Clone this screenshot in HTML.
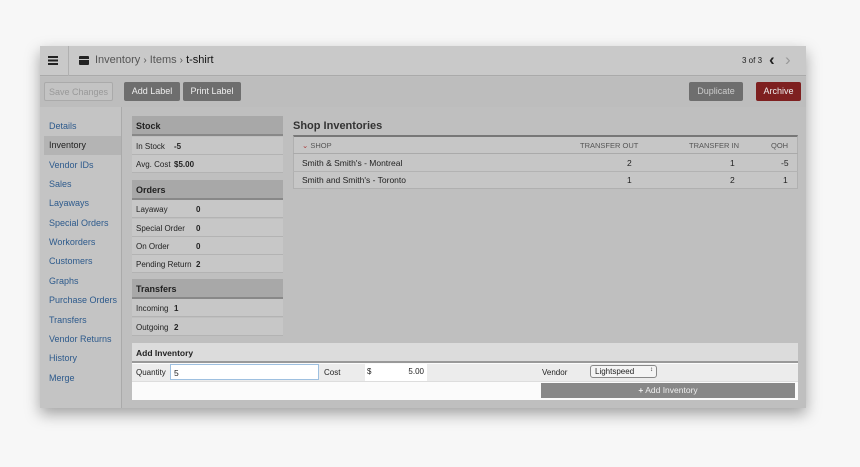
<!DOCTYPE html>
<html><head><style>
*{box-sizing:border-box;margin:0;padding:0}
body{width:860px;height:467px;background:#f7f7f7;font-family:"Liberation Sans",sans-serif;font-size:8.5px;color:#222;position:relative;overflow:hidden}
.a{position:absolute}
.win{left:40px;top:46px;width:766px;height:362px;background:#bfbfbf;box-shadow:0 6px 14px rgba(0,0,0,.35)}
.btn{position:absolute;height:19px;line-height:19px;text-align:center;color:#eee;font-size:9px;border-radius:2px}
.side div{position:absolute;left:9px;color:#2d5a8c;font-size:9px}
.ph{position:absolute;left:132px;width:151px;height:20px;background:#a8a8a8;border-bottom:2px solid #888;font-weight:bold;font-size:9px;padding:5px 0 0 4px}
.pr{position:absolute;left:132px;width:151px;height:18px;background:#c7c7c7;border-bottom:1px solid #b3b3b3;font-size:8px;padding:5px 0 0 4px}
.pr b{position:absolute;top:5px}
</style></head><body>
<div class="a win">
 <div class="a" style="left:0;top:0;width:766px;height:30px;background:#c9c9c9;border-bottom:1px solid #aaa"></div>
 <div class="a" style="left:28px;top:0;width:1px;height:30px;background:#b0b0b0"></div>
 <div class="a" style="left:8px;top:10px;width:10px;height:2px;background:#222;box-shadow:0 3.5px 0 #222,0 7px 0 #222"></div>
 <div class="a" style="left:39px;top:10px;width:10px;height:9px;background:#222;border-radius:1px"></div>
 <div class="a" style="left:39px;top:13px;width:10px;height:1px;background:#c9c9c9"></div>
 <div class="a" style="left:55px;top:8px;font-size:11px;color:#555">Inventory <span style="font-size:10px">›</span> Items <span style="font-size:10px">›</span> <span style="color:#111">t-shirt</span></div>
 <div class="a" style="left:702px;top:10px;font-size:8px;color:#222">3 of 3</div>
 <div class="a" style="left:729px;top:4px;font-size:17px;color:#222;font-weight:bold">&#8249;</div>
 <div class="a" style="left:745px;top:4px;font-size:17px;color:#999">&#8250;</div>
 <div class="a" style="left:0;top:31px;width:766px;height:30px;background:#bdbdbd"></div>
 <div class="btn" style="left:4px;top:36px;width:69px;border:1px solid #aaa;color:#999;background:#c3c3c3">Save Changes</div>
 <div class="btn" style="left:84px;top:36px;width:56px;background:#6e6e6e">Add Label</div>
 <div class="btn" style="left:143px;top:36px;width:58px;background:#6e6e6e">Print Label</div>
 <div class="btn" style="left:649px;top:36px;width:54px;background:#6e6e6e;color:#ccc">Duplicate</div>
 <div class="btn" style="left:716px;top:36px;width:45px;background:#7e2020">Archive</div>
 <div class="a" style="left:0;top:61px;width:82px;height:301px;background:#c4c4c4;border-right:1px solid #aaa"></div>
 <div class="a" style="left:4px;top:90px;width:77px;height:19px;background:#b4b4b4"></div>
 <div class="side">
  <div style="top:75px">Details</div><div style="top:94px;color:#222">Inventory</div><div style="top:114px">Vendor IDs</div><div style="top:133px">Sales</div><div style="top:152px">Layaways</div><div style="top:172px">Special Orders</div><div style="top:191px">Workorders</div><div style="top:210px">Customers</div><div style="top:230px">Graphs</div><div style="top:249px">Purchase Orders</div><div style="top:269px">Transfers</div><div style="top:288px">Vendor Returns</div><div style="top:307px">History</div><div style="top:327px">Merge</div>
 </div>
</div>
<div class="ph" style="top:116px">Stock</div>
<div class="pr" style="top:137px">In Stock<b style="left:42px">-5</b></div>
<div class="pr" style="top:155px">Avg. Cost<b style="left:42px">$5.00</b></div>
<div class="ph" style="top:180px">Orders</div>
<div class="pr" style="top:200px">Layaway<b style="left:64px">0</b></div>
<div class="pr" style="top:219px">Special Order<b style="left:64px">0</b></div>
<div class="pr" style="top:237px">On Order<b style="left:64px">0</b></div>
<div class="pr" style="top:255px">Pending Return<b style="left:64px">2</b></div>
<div class="ph" style="top:279px">Transfers</div>
<div class="pr" style="top:299px">Incoming<b style="left:42px">1</b></div>
<div class="pr" style="top:318px">Outgoing<b style="left:42px">2</b></div>
<div class="a" style="left:293px;top:120px;font-size:11px;font-weight:bold;color:#333">Shop Inventories</div>
<div class="a" style="left:293px;top:135px;width:505px;height:54px;background:#c6c6c6;border:1px solid #b0b0b0;border-top:2px solid #777"></div>
<div class="a" style="left:293px;top:153px;width:505px;height:1px;background:#aaa"></div>
<div class="a" style="left:293px;top:171px;width:505px;height:1px;background:#b3b3b3"></div>
<div class="a" style="left:302px;top:141px;font-size:7.5px;color:#555"><span style="color:#a33">&#8964;</span> SHOP</div>
<div class="a" style="left:580px;top:141px;font-size:7.5px;color:#555">TRANSFER OUT</div>
<div class="a" style="left:689px;top:141px;font-size:7.5px;color:#555">TRANSFER IN</div>
<div class="a" style="left:771px;top:141px;font-size:7.5px;color:#555">QOH</div>
<div class="a" style="left:302px;top:158px;font-size:8.5px">Smith &amp; Smith's - Montreal</div>
<div class="a" style="left:627px;top:158px">2</div><div class="a" style="left:730px;top:158px">1</div><div class="a" style="left:781px;top:158px">-5</div>
<div class="a" style="left:302px;top:175px;font-size:8.5px">Smith and Smith's - Toronto</div>
<div class="a" style="left:627px;top:175px">1</div><div class="a" style="left:730px;top:175px">2</div><div class="a" style="left:783px;top:175px">1</div>
<div class="a" style="left:132px;top:343px;width:666px;height:57px;background:#fbfbfb"></div>
<div class="a" style="left:132px;top:343px;width:666px;height:20px;background:#dcdcdc;border-bottom:2px solid #999;font-weight:bold;font-size:8.5px;padding:5px 0 0 4px">Add Inventory</div>
<div class="a" style="left:132px;top:364px;width:666px;height:18px;background:#ececec;border-bottom:1px solid #ddd"></div>
<div class="a" style="left:136px;top:368px;font-size:8px">Quantity</div>
<div class="a" style="left:170px;top:364px;width:149px;height:16px;background:#fff;border:1px solid #9ec0e0;font-size:8.5px;padding:3px 3px">5</div>
<div class="a" style="left:324px;top:368px;font-size:8px">Cost</div>
<div class="a" style="left:365px;top:364px;width:62px;height:17px;background:#fff;font-size:8px;padding:3px 2px">$<span style="position:absolute;right:3px">5.00</span></div>
<div class="a" style="left:542px;top:368px;font-size:8px">Vendor</div>
<div class="a" style="left:590px;top:365px;width:67px;height:13px;border:1px solid #888;border-radius:3px;background:#f4f4f4;font-size:8px;padding:1px 4px">Lightspeed<span style="position:absolute;right:3px;font-size:6px">&#8597;</span></div>
<div class="a" style="left:541px;top:383px;width:254px;height:15px;background:#888;color:#eee;text-align:center;font-size:8.5px;line-height:15px"><b>+</b> Add Inventory</div>
</body></html>
